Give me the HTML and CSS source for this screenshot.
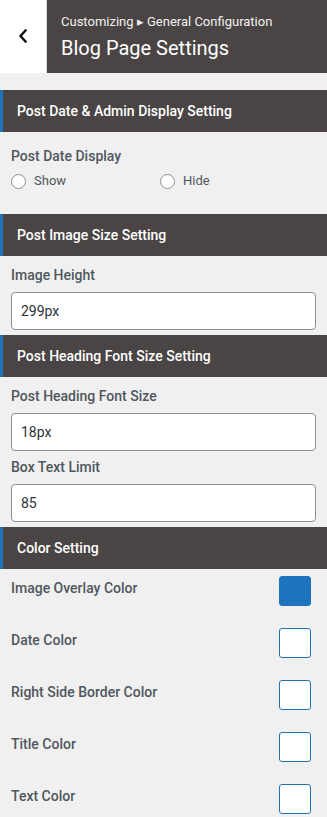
FILE: index.html
```html
<!DOCTYPE html>
<html>
<head>
<meta charset="utf-8">
<link rel="stylesheet" href="styles.css">
</head>
<body>
<div class="panel">
  <header class="top">
    <button class="back" aria-label="Back">
      <svg width="10" height="14" viewBox="0 0 10 14"><path d="M7.5 1.5 L2.5 7 L7.5 12.5" fill="none" stroke="#111" stroke-width="2.4" stroke-linecap="square"/></svg>
    </button>
    <div class="title-box">
      <div class="crumb">Customizing ▸ General Configuration</div>
      <div class="title">Blog Page Settings</div>
    </div>
  </header>

  <section class="group">
    <h3 class="group-head">Post Date &amp; Admin Display Setting</h3>
    <div class="group-body first">
      <div class="label">Post Date Display</div>
      <div class="radios">
        <label class="radio"><span class="circle"></span>Show</label>
        <label class="radio"><span class="circle"></span>Hide</label>
      </div>
    </div>
  </section>

  <section class="group">
    <h3 class="group-head">Post Image Size Setting</h3>
    <div class="group-body tight">
      <div class="label">Image Height</div>
      <div class="input">299px</div>
    </div>
  </section>

  <section class="group">
    <h3 class="group-head">Post Heading Font Size Setting</h3>
    <div class="group-body tight">
      <div class="label">Post Heading Font Size</div>
      <div class="input">18px</div>
      <div class="label">Box Text Limit</div>
      <div class="input">85</div>
    </div>
  </section>

  <section class="group">
    <h3 class="group-head">Color Setting</h3>
    <div class="colors">
      <div class="color-row"><span class="clabel">Image Overlay Color</span><span class="swatch filled"></span></div>
      <div class="color-row"><span class="clabel">Date Color</span><span class="swatch"></span></div>
      <div class="color-row"><span class="clabel">Right Side Border Color</span><span class="swatch"></span></div>
      <div class="color-row"><span class="clabel">Title Color</span><span class="swatch"></span></div>
      <div class="color-row"><span class="clabel">Text Color</span><span class="swatch"></span></div>
    </div>
  </section>
</div>
</body>
</html>
```

FILE: styles.css
```css
* { box-sizing: border-box; }
html, body {
  margin: 0;
  padding: 0;
  background: #f0f0f0;
  font-family: Roboto, "Liberation Sans", sans-serif;
}
.panel {
  width: 327px;
  height: 817px;
  overflow: hidden;
  background: #f0f0f0;
}
.top {
  display: flex;
  height: 73px;
}
.back {
  width: 47px;
  height: 73px;
  border: none;
  border-right: 1px solid #ddd;
  background: #fff;
  padding: 0 0 2px 0;
  display: flex;
  align-items: center;
  justify-content: center;
}
.title-box {
  flex: 1;
  background: #4a4544;
  padding: 14px 0 0 14px;
}
.crumb {
  color: #f0f0f0;
  font-size: 13px;
  line-height: 16px;
}
.title {
  color: #fff;
  font-size: 20px;
  line-height: 24px;
  margin-top: 6px;
}
.group-head {
  margin: 0;
  height: 42px;
  background: #4a4544;
  border-left: 3px solid #1e73be;
  color: #fff;
  font-size: 14px;
  font-weight: 500;
  line-height: 42px;
  padding-left: 14px;
}
.group:first-of-type .group-head { margin-top: 17px; }
.group-body {
  padding: 11px 11px 0 11px;
}
.group-body.first {
  height: 82px;
  padding-top: 16px;
}
.group-body.tight { padding-bottom: 5px; }
.label {
  color: #50575e;
  font-size: 14px;
  font-weight: 500;
  line-height: 17px;
  margin-bottom: 8px;
}
.radios {
  display: flex;
  margin-top: 8px;
}
.radio {
  display: flex;
  align-items: center;
  width: 149px;
  color: #50575e;
  font-size: 13px;
  line-height: 16px;
}
.circle {
  width: 15px;
  height: 15px;
  border: 1px solid #8c8f94;
  border-radius: 50%;
  background: #fff;
  margin-right: 8px;
}
.input {
  height: 38px;
  background: #fff;
  border: 1px solid #8c8f94;
  border-radius: 4px;
  padding: 0 10px 0 9px;
  display: flex;
  align-items: center;
  color: #2c3338;
  font-size: 14px;
  margin-bottom: 8px;
}
.group-body.tight .input:last-child { margin-bottom: 0; }
.colors {
  padding: 7px 16px 0 11px;
}
.color-row {
  display: flex;
  align-items: flex-start;
  justify-content: space-between;
  height: 52px;
}
.clabel {
  color: #50575e;
  font-size: 14px;
  font-weight: 500;
  line-height: 17px;
  margin-top: 4px;
}
.swatch {
  width: 32px;
  height: 30px;
  border: 1px solid #2271b1;
  border-radius: 3px;
  background: #fff;
}
.swatch.filled {
  background: #1e73be;
  border-color: #1e73be;
}
```
